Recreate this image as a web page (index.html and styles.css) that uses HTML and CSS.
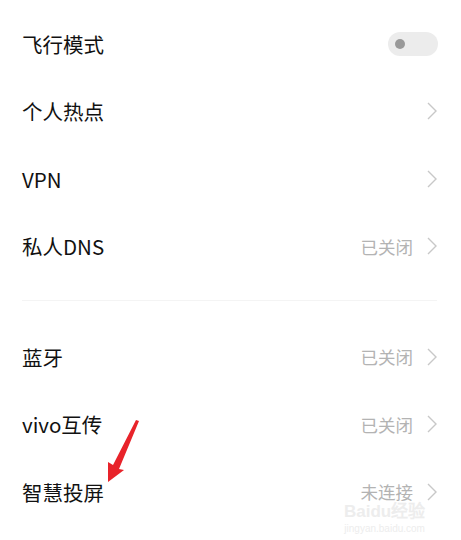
FILE: index.html
```html
<!DOCTYPE html>
<html lang="zh-CN">
<head>
    <meta charset="utf-8">
    <title>设置</title>
    <link rel="stylesheet" href="styles.css">
</head>
<body>
<div class="list">
    <div class="row">
        <span class="label">飞行模式</span>
        <span class="toggle"><span class="knob"></span></span>
    </div>
    <div class="row">
        <span class="label">个人热点</span>
        <svg class="chev" viewBox="0 0 10 18"><polyline points="1,1 9,9 1,17"/></svg>
    </div>
    <div class="row">
        <span class="label">VPN</span>
        <svg class="chev" viewBox="0 0 10 18"><polyline points="1,1 9,9 1,17"/></svg>
    </div>
    <div class="row">
        <span class="label">私人DNS</span>
        <span class="value">已关闭</span>
        <svg class="chev" viewBox="0 0 10 18"><polyline points="1,1 9,9 1,17"/></svg>
    </div>
    <div class="divider"></div>
    <div class="row">
        <span class="label">蓝牙</span>
        <span class="value">已关闭</span>
        <svg class="chev" viewBox="0 0 10 18"><polyline points="1,1 9,9 1,17"/></svg>
    </div>
    <div class="row">
        <span class="label">vivo互传</span>
        <span class="value">已关闭</span>
        <svg class="chev" viewBox="0 0 10 18"><polyline points="1,1 9,9 1,17"/></svg>
    </div>
    <div class="row">
        <span class="label">智慧投屏</span>
        <span class="value">未连接</span>
        <svg class="chev" viewBox="0 0 10 18"><polyline points="1,1 9,9 1,17"/></svg>
    </div>
</div>
<svg class="arrow" width="40" height="70" viewBox="100 415 40 70">
    <polygon fill="#e8232a" points="108,482 108,462 113,465 136,420 139,421 119,469 124,470"/>
</svg>
<div class="watermark">
    <div class="wm-logo">Baidu经验</div>
    <div class="wm-url">jingyan.baidu.com</div>
</div>
</body>
</html>
```

FILE: styles.css
```css
* {
    box-sizing: border-box;
    margin: 0;
    padding: 0;
}
html, body {
    width: 100%;
    height: 100%;
    overflow: hidden;
}
body {
    background: #fff;
    font-family: "Noto Sans CJK SC", "Noto Sans", sans-serif;
    color: #111;
    position: relative;
}
.list {
    padding: 10px 24px 0 22px;
}
.row {
    height: 67.5px;
    display: flex;
    align-items: center;
}
.label {
    font-size: 20.5px;
    flex: 1;
    line-height: 1;
}
.value {
    font-size: 17.5px;
    color: #b3b3b3;
    margin-right: 14px;
    line-height: 1;
}
.chev {
    width: 10px;
    height: 18px;
    fill: none;
    stroke: #c8c8c8;
    stroke-width: 1.4;
}
.toggle {
    width: 50px;
    height: 24px;
    border-radius: 12px;
    background: #ececec;
    display: flex;
    align-items: center;
    padding-left: 7px;
    margin-right: -1px;
}
.knob {
    width: 10px;
    height: 10px;
    border-radius: 50%;
    background: #999;
}
.divider {
    height: 1px;
    background: #f4f4f4;
    margin: 20px 0 22px;
}
.arrow {
    position: absolute;
    left: 100px;
    top: 415px;
}
.watermark {
    position: absolute;
    left: 344px;
    top: 503px;
    color: #ededed;
    text-align: center;
    font-family: "Liberation Sans", sans-serif;
    line-height: 1;
}
.wm-logo {
    font-size: 17px;
    font-weight: bold;
}
.wm-url {
    font-size: 10px;
    margin-top: 4px;
}
```
